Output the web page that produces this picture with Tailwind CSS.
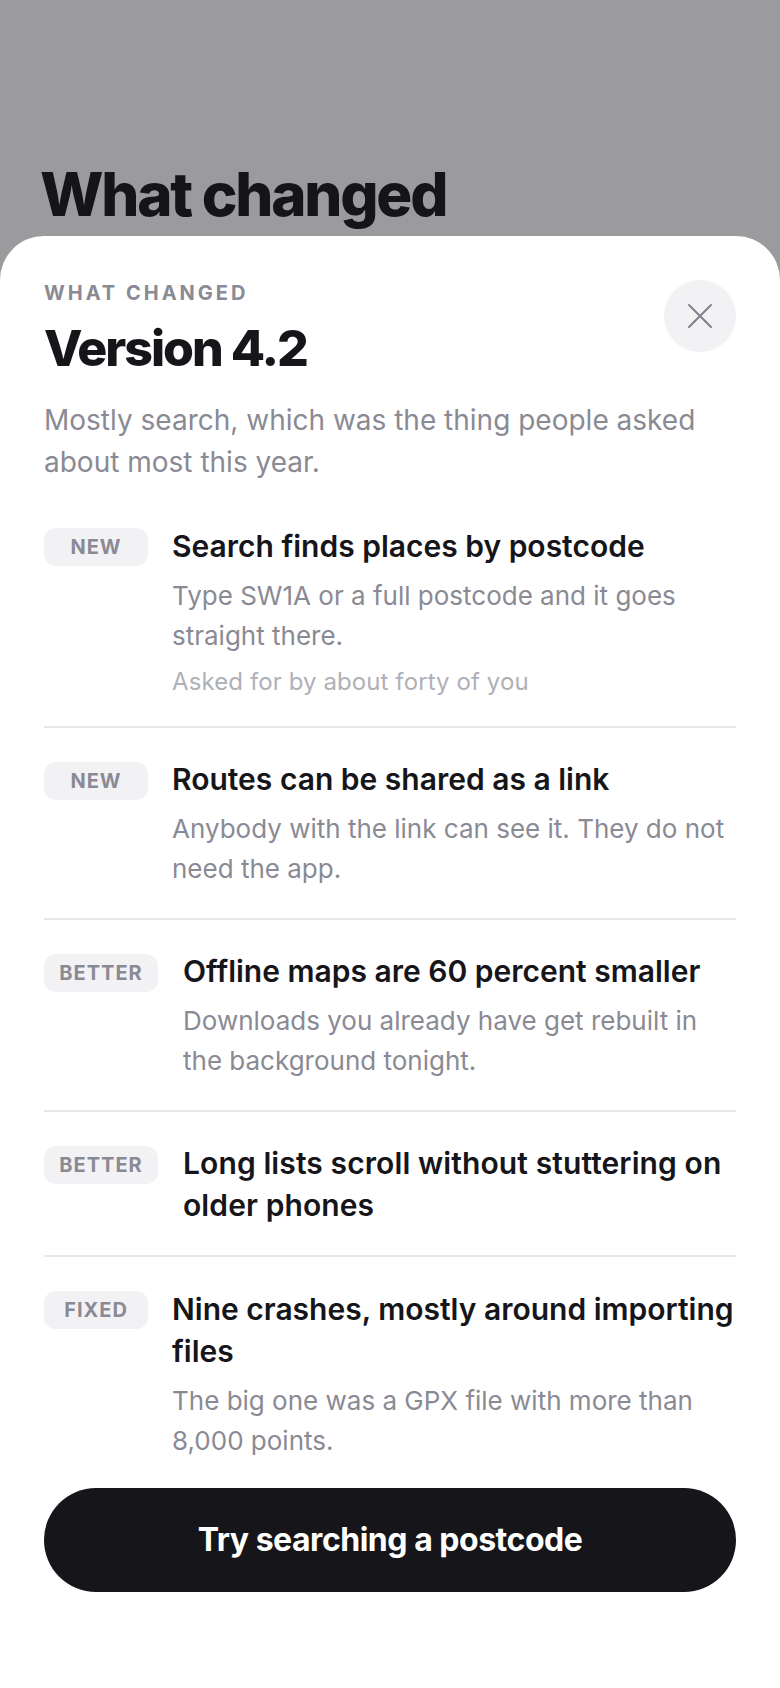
<!DOCTYPE html>
<html lang="en">
  <head>
    <meta charset="UTF-8" />
    <meta name="viewport" content="width=device-width, initial-scale=1.0" />
    <script src="https://cdn.jsdelivr.net/npm/@tailwindcss/browser@4"></script>
    <title>What changed</title>
  </head>
  <body class="relative w-[780px] h-[1688px] overflow-hidden bg-[#9b9b9d] font-['Inter',sans-serif] text-[#16161a]">
    <h1 class="pt-[158px] pl-[40px] text-[60px] leading-[72px] font-extrabold tracking-[-0.037em] text-[#151518]">What changed</h1>

    <div class="absolute left-0 right-0 top-[236px] bottom-0 bg-white rounded-t-[44px] px-[44px] pt-[44px]">
      <div class="flex justify-between items-start">
        <div class="pt-[1px]">
          <p class="text-[20px] leading-[24px] font-bold tracking-[0.15em] text-[#8a8a94]">WHAT CHANGED</p>
          <h2 class="mt-[14px] text-[50px] leading-[59px] font-extrabold tracking-[-0.04em]">Version 4.2</h2>
        </div>
        <button class="w-[72px] h-[72px] rounded-full bg-[#f2f2f4] flex items-center justify-center">
          <svg width="28" height="28" viewBox="0 0 28 28" fill="none" stroke="#80808a" stroke-width="2" stroke-linecap="round"><path d="M3 3L25 25M25 3L3 25" /></svg>
        </button>
      </div>
      <p class="mt-[21px] text-[28px] leading-[42px] text-[#8a8a94]">Mostly search, which was the thing people asked about most this year.</p>

      <ul class="mt-[42px] h-[947px] overflow-hidden">
        <li class="flex gap-[24px] pb-[26px] border-b-2 border-[#e8e8ec]">
          <span class="shrink-0 w-[104px] h-[38px] mt-[3px] rounded-[12px] bg-[#f2f2f4] flex items-center justify-center text-[20px] font-bold tracking-[0.05em] text-[#8a8a94]">NEW</span>
          <div>
            <h3 class="text-[30px] leading-[42px] font-semibold">Search finds places by postcode</h3>
            <p class="mt-[9px] text-[26px] leading-[40px] text-[#8a8a94]">Type SW1A or a full postcode and it goes straight there.</p>
            <p class="mt-[8px] text-[24px] leading-[36px] tracking-[0.1px] text-[#b0b0b8]">Asked for by about forty of you</p>
          </div>
        </li>
        <li class="flex gap-[24px] pt-[30px] pb-[29px] border-b-2 border-[#e8e8ec]">
          <span class="shrink-0 w-[104px] h-[38px] mt-[4px] rounded-[12px] bg-[#f2f2f4] flex items-center justify-center text-[20px] font-bold tracking-[0.05em] text-[#8a8a94]">NEW</span>
          <div>
            <h3 class="text-[30px] leading-[42px] font-semibold">Routes can be shared as a link</h3>
            <p class="mt-[9px] text-[26px] leading-[40px] text-[#8a8a94]">Anybody with the link can see it. They do not need the app.</p>
          </div>
        </li>
        <li class="flex gap-[25px] pt-[30px] pb-[29px] border-b-2 border-[#e8e8ec]">
          <span class="shrink-0 w-[114px] h-[38px] mt-[4px] rounded-[12px] bg-[#f2f2f4] flex items-center justify-center text-[20px] font-bold tracking-[0.05em] text-[#8a8a94]">BETTER</span>
          <div>
            <h3 class="text-[30px] leading-[42px] font-semibold">Offline maps are 60 percent smaller</h3>
            <p class="mt-[9px] text-[26px] leading-[40px] text-[#8a8a94]">Downloads you already have get rebuilt in the background tonight.</p>
          </div>
        </li>
        <li class="flex gap-[25px] pt-[30px] pb-[29px] border-b-2 border-[#e8e8ec]">
          <span class="shrink-0 w-[114px] h-[38px] mt-[4px] rounded-[12px] bg-[#f2f2f4] flex items-center justify-center text-[20px] font-bold tracking-[0.05em] text-[#8a8a94]">BETTER</span>
          <div>
            <h3 class="text-[30px] leading-[42px] tracking-[0.1px] font-semibold">Long lists scroll without stuttering on older phones</h3>
          </div>
        </li>
        <li class="flex gap-[24px] pt-[31px]">
          <span class="shrink-0 w-[104px] h-[38px] mt-[3px] rounded-[12px] bg-[#f2f2f4] flex items-center justify-center text-[20px] font-bold tracking-[0.05em] text-[#8a8a94]">FIXED</span>
          <div>
            <h3 class="text-[30px] leading-[42px] font-semibold">Nine crashes, mostly around importing files</h3>
            <p class="mt-[9px] text-[26px] leading-[40px] text-[#8a8a94]">The big one was a GPX file with more than 8,000 points.</p>
          </div>
        </li>
      </ul>

      <button class="mt-[16px] w-full h-[104px] rounded-full bg-[#16161a] text-white text-[32px] font-bold tracking-[-0.015em]">Try searching a postcode</button>
    </div>
  </body>
</html>
